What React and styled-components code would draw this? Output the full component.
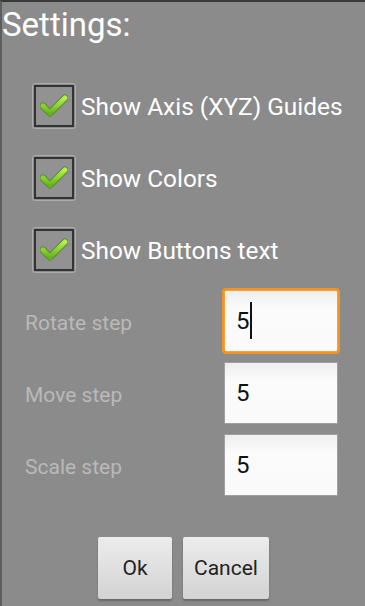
import React, { useState } from "react"
import styled, { createGlobalStyle } from "styled-components"

const GlobalStyle = createGlobalStyle`
  html, body {
    margin: 0;
    padding: 0;
    background: #8b8b8b;
  }
  body {
    font-family: Roboto, "Liberation Sans", sans-serif;
  }
`

const settings = [
  { id: "axis", label: "Show Axis (XYZ) Guides" },
  { id: "colors", label: "Show Colors" },
  { id: "buttons", label: "Show Buttons text" },
]

const steps = [
  { id: "rotate", label: "Rotate step", value: "5", focused: true },
  { id: "move", label: "Move step", value: "5" },
  { id: "scale", label: "Scale step", value: "5" },
]

const CheckMark = () => (
  <svg width="28" height="24" viewBox="0 0 28 24">
    <defs>
      <linearGradient id="tick" x1="0" y1="0" x2="0" y2="1">
        <stop offset="0" stopColor="#b4f04a" />
        <stop offset="1" stopColor="#62b818" />
      </linearGradient>
    </defs>
    <polyline points="3,12 10,19 25,4" fill="none" stroke="#4d7d1c" strokeWidth="7" strokeLinecap="round" strokeLinejoin="round" opacity="0.7" />
    <polyline points="3,12 10,19 25,4" fill="none" stroke="url(#tick)" strokeWidth="5" strokeLinecap="round" strokeLinejoin="round" />
  </svg>
)

const App = () => {
  const [checked, setChecked] = useState({ axis: true, colors: true, buttons: true })

  return (
    <>
      <GlobalStyle />
      <Dialog>
        <Title>Settings:</Title>
        <CheckList>
          {settings.map(s => (
            <CheckRow key={s.id} onClick={() => setChecked({ ...checked, [s.id]: !checked[s.id] })}>
              <CheckBox>
                <CheckInner>{checked[s.id] && <CheckMark />}</CheckInner>
              </CheckBox>
              <CheckLabel>{s.label}</CheckLabel>
            </CheckRow>
          ))}
        </CheckList>
        <StepList>
          {steps.map(s => (
            <StepRow key={s.id}>
              <StepLabel>{s.label}</StepLabel>
              <Field $focused={s.focused}>
                <FieldValue>{s.value}</FieldValue>
                {s.focused && <Cursor />}
              </Field>
            </StepRow>
          ))}
        </StepList>
        <ButtonBar>
          <Button $w={74}>Ok</Button>
          <Button $w={86}>Cancel</Button>
        </ButtonBar>
      </Dialog>
    </>
  )
}

export default App

const Dialog = styled.div`
  height: 606px;
  box-sizing: border-box;
  border-top: 2px solid #3a3a3a;
  border-left: 2px solid #5e5e5e;
  background: #8b8b8b;
  display: flex;
  flex-direction: column;
`

const Title = styled.div`
  font-size: 33px;
  line-height: 38px;
  padding-top: 4px;
  color: #ffffff;
`

const CheckList = styled.div`
  margin-top: 39px;
  padding-left: 30px;
  display: flex;
  flex-direction: column;
  gap: 26px;
`

const CheckRow = styled.div`
  display: flex;
  align-items: center;
  gap: 5px;
  cursor: pointer;
`

const CheckBox = styled.div`
  width: 44px;
  height: 46px;
  box-sizing: border-box;
  border: 1px solid #acacac;
  border-radius: 3px;
  padding: 1px;
`

const CheckInner = styled.div`
  width: 100%;
  height: 100%;
  box-sizing: border-box;
  border: 2px solid #333333;
  background: #929292;
  display: flex;
  align-items: center;
  justify-content: center;
`

const CheckLabel = styled.span`
  font-size: 24.4px;
  color: #ffffff;
`

const StepList = styled.div`
  margin-top: 17px;
  display: flex;
  flex-direction: column;
  gap: 10px;
`

const StepRow = styled.div`
  display: grid;
  grid-template-columns: 1fr 114px;
  align-items: center;
  padding-left: 23px;
  padding-right: 27px;
`

const StepLabel = styled.span`
  font-size: 21px;
  color: #b9b9b9;
  padding-top: 3px;
`

const Field = styled.div`
  position: relative;
  height: 62px;
  box-sizing: border-box;
  display: flex;
  align-items: center;
  padding-left: 11px;
  background: linear-gradient(#eeeeee, #fbfbfb 30%, #fafafa);
  border: 1px solid ${p => (p.$focused ? "#f7a03a" : "#a0a0a0")};
  box-shadow: ${p => (p.$focused ? "0 0 0 2px #f39422" : "none")};
  border-radius: ${p => (p.$focused ? "2px" : "0")};
`

const FieldValue = styled.span`
  font-size: 24px;
  color: #111111;
`

const Cursor = styled.span`
  position: absolute;
  left: 25px;
  top: 11px;
  width: 2px;
  height: 37px;
  background: #111111;
`

const ButtonBar = styled.div`
  margin-top: 41px;
  display: flex;
  justify-content: center;
  gap: 11px;
`

const Button = styled.button`
  width: ${p => p.$w}px;
  height: 62px;
  border: none;
  border-radius: 2px;
  background: linear-gradient(#ececec, #d3d3d3);
  box-shadow: 0 1px 0 #6a6a6a, 0 2px 2px rgba(0, 0, 0, 0.25);
  font-family: Roboto, "Liberation Sans", sans-serif;
  font-size: 21px;
  color: #222222;
  padding: 0;
`
